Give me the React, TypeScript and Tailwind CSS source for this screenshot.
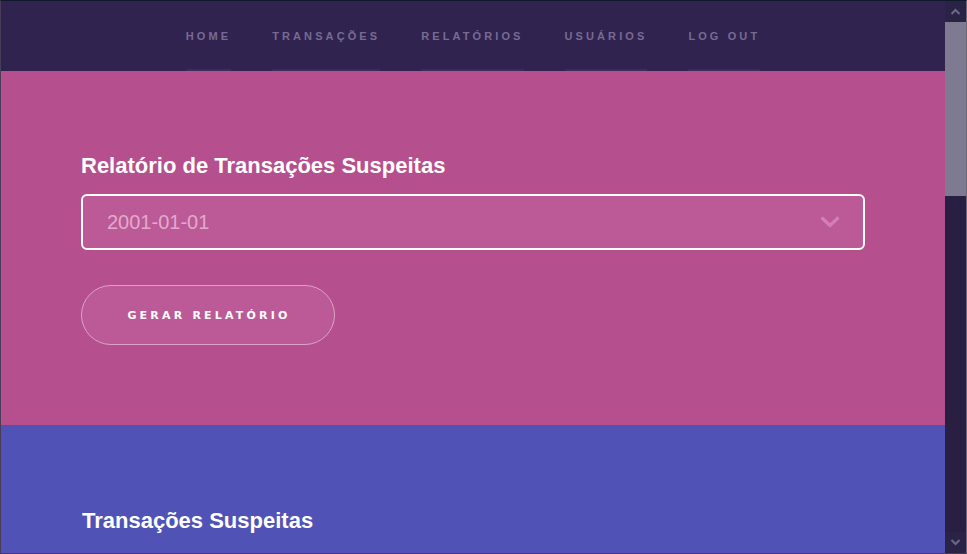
import React from "react";

const navItems = ["HOME", "TRANSAÇÕES", "RELATÓRIOS", "USUÁRIOS", "LOG OUT"];

export default function App() {
  return (
    <div className="flex h-[554px] w-[967px] overflow-hidden border border-t-[#0e1a2a] border-l-[#4a3b58] border-r-[#6c6a78] border-b-[#4a3b58] bg-[#281f42]" style={{ fontFamily: '"Liberation Sans", Arial, sans-serif' }}>
      <div className="flex min-w-0 flex-1 flex-col">
        <nav className="flex h-[70px] shrink-0 items-stretch justify-center gap-[41px] bg-[#30234f]">
          {navItems.map((item) => (
            <a
              key={item}
              className="flex items-center border-b-[2px] border-[#3a2c5c] pt-[2px] text-[11px] font-bold tracking-[3.1px] text-[#776b93]"
            >
              {item}
            </a>
          ))}
        </nav>
        <section className="flex h-[354px] shrink-0 flex-col bg-[#b64f8d] px-[80px] pt-[82px]">
          <h2 className="text-[22px] leading-[25px] font-bold text-white">Relatório de Transações Suspeitas</h2>
          <div className="mt-[16px] flex h-[56px] items-center justify-between rounded-[6px] border-2 border-white bg-[#bb5a96] pl-[24px] pr-[20px]">
            <span className="text-[20px] text-[#e3a9cd]">2001-01-01</span>
            <svg width="22" height="14" viewBox="0 0 22 14" className="mr-[2px]">
              <path d="M2.5 2.5 L11 10.5 L19.5 2.5" fill="none" stroke="#d37fb4" strokeWidth="3.2" />
            </svg>
          </div>
          <button className="mt-[35px] flex h-[60px] w-[254px] items-center justify-center rounded-full border border-[#dba3c6] bg-[#bb5a96] text-[11px] font-bold tracking-[3.2px] text-white" style={{ fontFamily: '"DejaVu Sans", Verdana, sans-serif' }}>
            <span className="pl-[2px] pt-[2px]">GERAR RELATÓRIO</span>
          </button>
        </section>
        <section className="flex-1 bg-[#5052b5] px-[81px] pt-[83px]">
          <h2 className="text-[22px] leading-[25px] font-bold text-white">Transações Suspeitas</h2>
        </section>
      </div>
      <div className="flex w-[21px] shrink-0 flex-col bg-[#281f42]">
        <div className="flex h-[21px] items-center justify-center bg-[#2b2346]">
          <svg width="11" height="7" viewBox="0 0 11 7">
            <path d="M1.5 6 L5.5 2 L9.5 6" fill="none" stroke="#6d6884" strokeWidth="2" />
          </svg>
        </div>
        <div className="h-[174px] bg-[#7d7a92]" />
        <div className="flex-1" />
        <div className="flex h-[21px] items-center justify-center bg-[#2b2346]">
          <svg width="11" height="7" viewBox="0 0 11 7">
            <path d="M1.5 1 L5.5 5 L9.5 1" fill="none" stroke="#6d6884" strokeWidth="2" />
          </svg>
        </div>
      </div>
    </div>
  );
}
